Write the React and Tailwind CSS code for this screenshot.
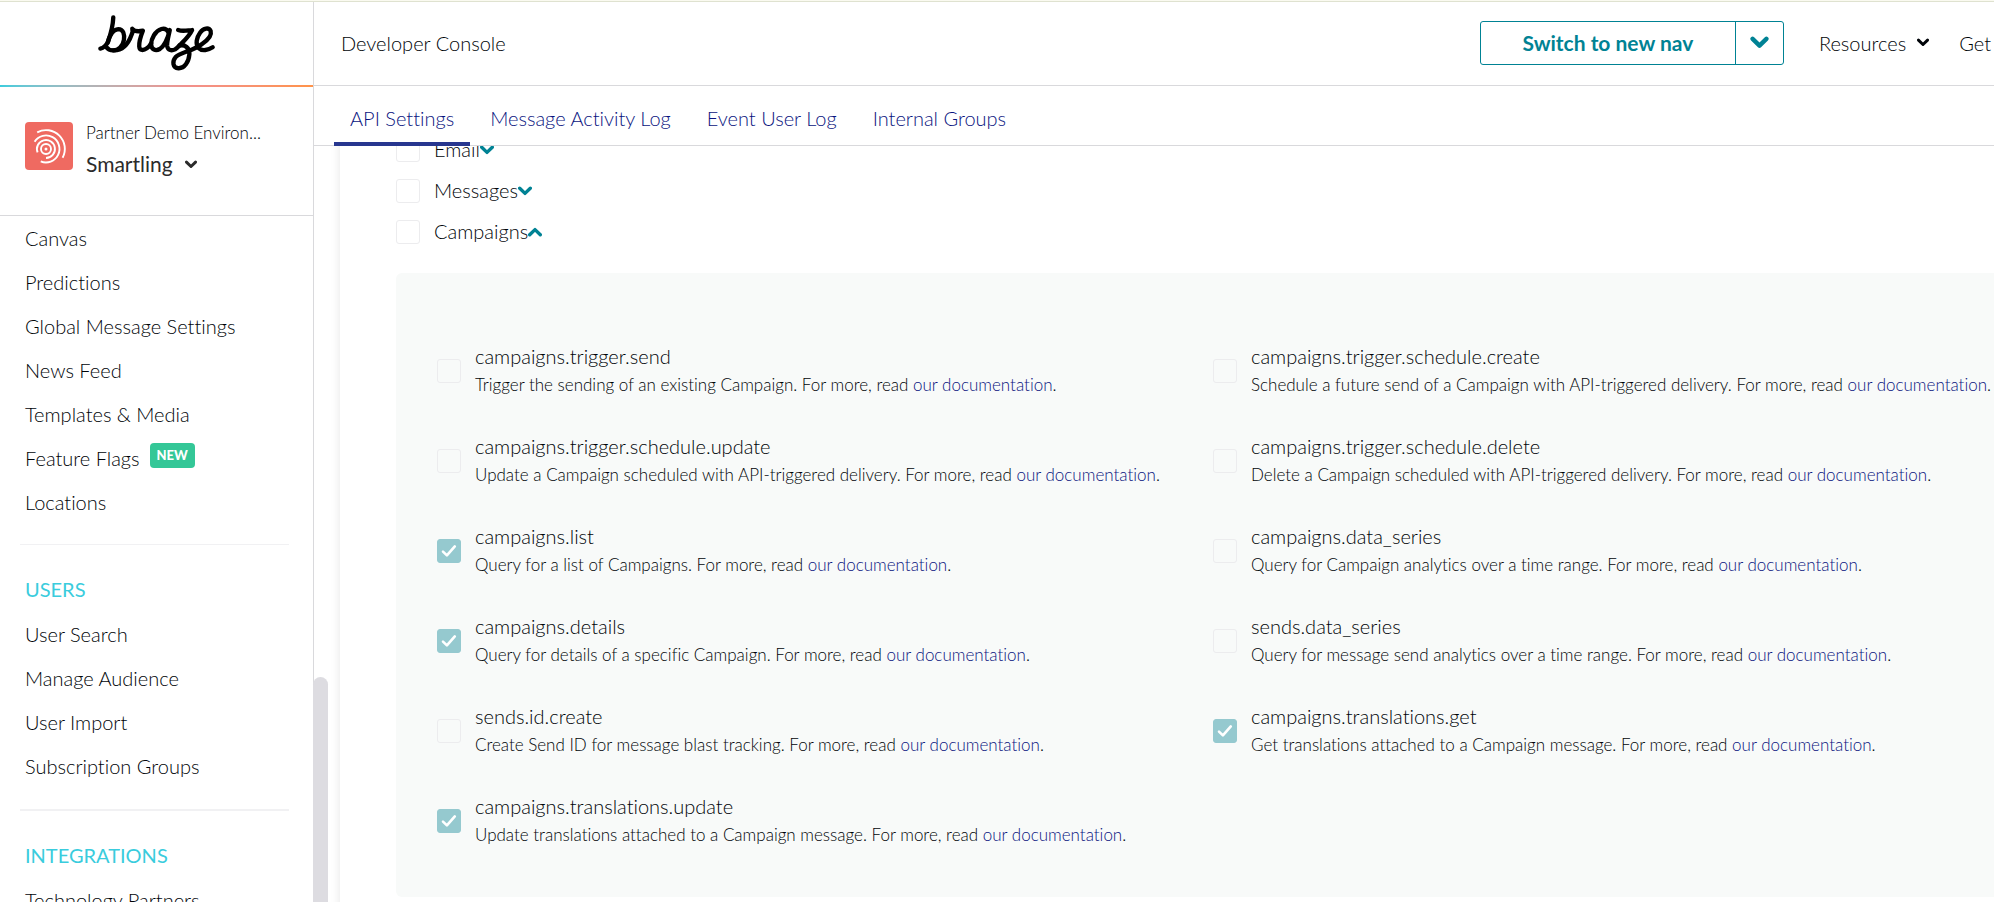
const campaignPermissions = [
  ["campaigns.trigger.send", "Trigger the sending of an existing Campaign.", false],
  ["campaigns.trigger.schedule.create", "Schedule a future send of a Campaign with API-triggered delivery.", false],
  ["campaigns.trigger.schedule.update", "Update a Campaign scheduled with API-triggered delivery.", false],
  ["campaigns.trigger.schedule.delete", "Delete a Campaign scheduled with API-triggered delivery.", false],
  ["campaigns.list", "Query for a list of Campaigns.", true],
  ["campaigns.data_series", "Query for Campaign analytics over a time range.", false],
  ["campaigns.details", "Query for details of a specific Campaign.", true],
  ["sends.data_series", "Query for message send analytics over a time range.", false],
  ["sends.id.create", "Create Send ID for message blast tracking.", false],
  ["campaigns.translations.get", "Get translations attached to a Campaign message.", true],
  ["campaigns.translations.update", "Update translations attached to a Campaign message.", true],
];

const engagementLinks = [
  "Canvas",
  "Predictions",
  "Global Message Settings",
  "News Feed",
  "Templates & Media",
  "Feature Flags",
  "Locations",
];
const userLinks = ["User Search", "Manage Audience", "User Import", "Subscription Groups"];
const tabs = ["API Settings", "Message Activity Log", "Event User Log", "Internal Groups"];

function Chevron({ className, up = false }) {
  return (
    <svg viewBox="0 0 14 10" className={className} fill="none" stroke="currentColor" strokeWidth="3.4" aria-hidden="true">
      <path d={up ? "M1.7 7.8 7 2.6 12.3 7.8" : "M1.7 2.2 7 7.4 12.3 2.2"} strokeLinecap="round" strokeLinejoin="round" />
    </svg>
  );
}

function BrazeLogo() {
  return (
    <svg
      viewBox="18 14 358 174"
      className="h-[58px] w-[119px]"
      fill="none"
      stroke="#000"
      strokeWidth="13"
      strokeLinecap="round"
      strokeLinejoin="round"
      role="img"
      aria-label="Braze"
    >
      <path d="M67 24 C66 50 58 78 51 98 C44 111 37 116 28 118" />
      <path d="M50 100 C56 76 68 60 82 59 C98 59 101 76 99 91 C96 111 82 123 67 123 C57 123 50 119 45 112" />
      <path d="M67 123 C96 124 112 104 122 76 C126 68 126 63 124 58 C130 66 142 67 156 64 C149 82 144 98 145 111 C146 125 158 124 168 117 C174 113 178 108 181 102" />
      <path d="M234 76 C233 61 222 56 212 59 C194 64 180 88 181 106 C182 121 194 126 207 119 C221 110 230 90 237 62 C233 82 228 97 229 110 C231 124 243 125 253 120 C258 117 262 113 266 108" />
      <path d="M262 62 C276 67 290 63 304 62 C296 80 278 96 266 109 C282 104 297 116 296 135 C294 158 281 178 263 177 C245 176 244 156 254 144 C269 128 306 126 334 104 C351 92 364 78 360 65 C355 53 338 56 328 70 C317 85 314 105 323 116 C334 127 354 122 366 114" />
    </svg>
  );
}

function CompanyAvatar() {
  return (
    <svg viewBox="0 0 48 48" className="size-12 shrink-0 rounded" fill="none" stroke="#fff" strokeWidth="1.9" aria-hidden="true">
      <rect width="48" height="48" fill="#ef6a61" stroke="none" />
      <circle cx="21" cy="27" r="1.5" fill="#fff" stroke="none" />
      <circle cx="21" cy="27" r="5" />
      <path d="M12.6 30.4 A9 9 0 1 1 21 36" />
      <path d="M8.7 21.3 A13.5 13.5 0 1 1 17.5 40" transform="rotate(8 21 27)" />
      <path d="M12.2 10.3 A18.8 18.8 0 0 1 37.6 35.8" />
    </svg>
  );
}

function Checkbox({ id, checked = false }) {
  return (
    <span className="relative size-6 shrink-0">
      <input
        id={id}
        type="checkbox"
        defaultChecked={checked}
        className="peer block size-6 appearance-none rounded-[3px] border border-[#ececee] checked:border-[#95c9cf] checked:bg-[#95c9cf]"
      />
      <svg
        viewBox="0 0 24 24"
        className="pointer-events-none absolute inset-0 hidden size-6 text-white peer-checked:block"
        fill="none"
        stroke="currentColor"
        strokeWidth="2.6"
        strokeLinecap="round"
        strokeLinejoin="round"
        aria-hidden="true"
      >
        <path d="M6 12.6 9.9 16.4 17.8 7.4" />
      </svg>
    </span>
  );
}

function NavLink({ children, badge }) {
  return (
    <li>
      <a href="#" className="flex h-11 items-center gap-[10px] px-[25px] text-xl">
        {children}
        {badge && (
          <span className="mb-1.5 flex h-[25px] items-center rounded bg-[#34c797] px-[7px] text-[13px] font-black text-white">
            {badge}
          </span>
        )}
      </a>
    </li>
  );
}

function SectionTitle({ children }) {
  return <h2 className="flex h-[46px] items-center px-[25px] text-xl font-normal text-[#3accdd]">{children}</h2>;
}

function PermissionGroup({ name, open = false }) {
  const id = "group-" + name;
  return (
    <div className="flex h-[41px] items-center">
      <Checkbox id={id} />
      <label htmlFor={id} className="ml-[14px] pb-0.5 text-xl">
        {name}
      </label>
      <button type="button" aria-label={"Toggle " + name} aria-expanded={open} className="text-[#008294]">
        <Chevron className="h-[10px] w-[14px]" up={open} />
      </button>
    </div>
  );
}

function Permission({ name, description, checked }) {
  return (
    <div className="flex items-center gap-[14px]">
      <Checkbox id={name} checked={checked} />
      <div className="whitespace-nowrap">
        <label htmlFor={name} className="mb-0.5 block text-xl leading-[26px]">
          {name}
        </label>
        <p className="text-[17px] leading-7">
          {description} For more, read{" "}
          <a href="#" className="text-[#0a1480]">
            our documentation
          </a>
          .
        </p>
      </div>
    </div>
  );
}

export default function App() {
  return (
    <div className="flex h-screen flex-col overflow-hidden bg-white font-['Lato','Liberation_Sans',sans-serif] font-light text-[#000408] [font-variant-ligatures:none]">
      <div className="h-0.5 shrink-0 border-b border-[#dfe2d0] bg-[#fafaf0]" />
      <div className="flex min-h-0 flex-1">
        <aside className="relative flex w-[314px] shrink-0 flex-col border-r border-[#d9d9dc]">
          <div className="flex h-[83px] shrink-0 justify-center pt-3">
            <BrazeLogo />
          </div>
          <div className="h-0.5 shrink-0 bg-linear-to-r from-[#3accdd] via-[#f2908c] via-60% to-[#ff9349]" />
          <div className="flex h-[129px] shrink-0 gap-[13px] border-b border-[#d9d9dc] px-[25px] pt-[35px]">
            <CompanyAvatar />
            <div className="-mt-1 min-w-0">
              <p className="text-[17px] leading-[30px]">Partner Demo Environ...</p>
              <button type="button" className="flex items-center gap-3 text-[21px] leading-8 font-normal text-[#2b2b2b]">
                Smartling
                <Chevron className="h-[9px] w-3" />
              </button>
            </div>
          </div>
          <nav className="min-h-0 flex-1 overflow-hidden">
            <ul>
              {engagementLinks.map((label) => (
                <NavLink key={label} badge={label === "Feature Flags" ? "NEW" : null}>
                  {label}
                </NavLink>
              ))}
            </ul>
            <hr className="mt-5 mr-6 mb-[21px] ml-5 border-[#f1f1f3]" />
            <SectionTitle>USERS</SectionTitle>
            <ul>
              {userLinks.map((label) => (
                <NavLink key={label}>{label}</NavLink>
              ))}
            </ul>
            <hr className="mt-[21px] mr-6 mb-[21px] ml-5 border-t-2 border-[#f1f1f3]" />
            <SectionTitle>INTEGRATIONS</SectionTitle>
            <ul>
              <NavLink>Technology Partners</NavLink>
            </ul>
          </nav>
          <div className="absolute -right-[15px] bottom-0 z-10 h-[225px] w-[15px] rounded-t-full bg-[#dddce1]" />
        </aside>

        <div className="flex min-w-0 flex-1 flex-col">
          <header className="flex h-[84px] shrink-0 items-center border-b border-[#d9d9dc] pr-[3px] pb-0.5 pl-[27px]">
            <h1 className="text-xl">Developer Console</h1>
            <div className="ml-auto flex h-11 rounded-[3px] border border-[#008294] text-[#008294]">
              <button type="button" className="w-[254px] text-[21px] font-bold">
                Switch to new nav
              </button>
              <button
                type="button"
                aria-label="More navigation options"
                className="flex w-12 items-center justify-center border-l border-[#008294]"
              >
                <Chevron className="h-[13px] w-[19px]" />
              </button>
            </div>
            <button type="button" className="ml-[35px] flex items-center gap-[11px] text-xl">
              Resources
              <Chevron className="h-[9px] w-3" />
            </button>
            <a href="#" className="ml-[30px] text-xl">
              Get
            </a>
          </header>

          <nav className="flex h-[60px] shrink-0 gap-1 border-b border-[#d9d9dc] pl-5">
            {tabs.map((tab, index) => (
              <a
                key={tab}
                href="#"
                className={
                  index === 0
                    ? "z-10 flex h-[60px] items-center border-b-4 border-[#27368f] px-4 pt-2 text-xl text-[#0a1480]"
                    : "flex h-[60px] items-center border-b-4 border-transparent px-4 pt-2 text-xl text-[#0a1480]"
                }
              >
                {tab}
              </a>
            ))}
          </nav>

          <main className="min-h-0 flex-1 overflow-hidden pl-[26px]">
            <section className="-mt-[25px] pt-2 pb-12 pl-14 shadow-[0_0_10px_rgba(0,0,0,0.1)]">
              <PermissionGroup name="Email" />
              <PermissionGroup name="Messages" />
              <PermissionGroup name="Campaigns" open />
              <div className="mt-[21px] grid grid-cols-2 gap-y-[34px] rounded-l-md bg-[#f8faf9] pt-[70px] pr-[5px] pb-12 pl-[41px]">
                {campaignPermissions.map(([name, description, checked]) => (
                  <Permission key={name} name={name} description={description} checked={checked} />
                ))}
              </div>
            </section>
          </main>
        </div>
      </div>
    </div>
  );
}
